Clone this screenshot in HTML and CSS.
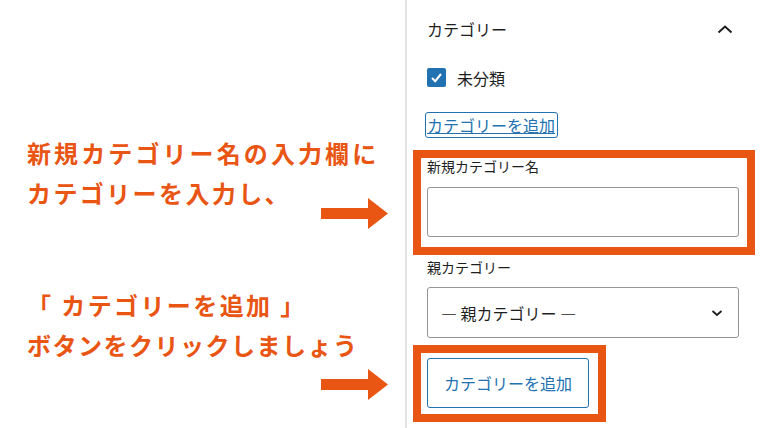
FILE: index.html
```html
<!DOCTYPE html>
<html lang="ja">
<head>
    <meta charset="UTF-8">
    <meta name="viewport" content="width=device-width, initial-scale=1.0">
    <title>カテゴリーを追加</title>
    <link rel="stylesheet" href="styles.css">
</head>
<body>
    <div class="page">
        <!-- 説明 -->
        <div class="notes">
            <p class="note">
                <span class="line line-wide">新規カテゴリー名の入力欄に</span>
                <span class="line">カテゴリーを入力し、</span>
            </p>
            <svg class="arrow arrow-first" width="67" height="31" viewBox="0 0 67 31">
                <rect x="0" y="10" width="49" height="11" fill="#e95513"/>
                <polygon points="47,0 67,15.5 47,31" fill="#e95513"/>
            </svg>
            <p class="note note-second">
                <span class="line">「 カテゴリーを追加 」</span>
                <span class="line line-narrow">ボタンをクリックしましょう</span>
            </p>
            <svg class="arrow arrow-second" width="67" height="31" viewBox="0 0 67 31">
                <rect x="0" y="10" width="49" height="11" fill="#e95513"/>
                <polygon points="47,0 67,15.5 47,31" fill="#e95513"/>
            </svg>
        </div>

        <!-- サイドバー -->
        <div class="sidebar">
            <div class="panel-header">
                <span>カテゴリー</span>
                <svg class="chevron-up" width="16" height="10" viewBox="0 0 16 10">
                    <polyline points="1.5,8.5 8,2.5 14.5,8.5" fill="none" stroke="#1e1e1e" stroke-width="2"/>
                </svg>
            </div>
            <div class="check-row">
                <span class="checkbox">
                    <svg width="19" height="19" viewBox="0 0 19 19">
                        <polyline points="5,10 8.2,13.2 14,6" fill="none" stroke="#fff" stroke-width="2"/>
                    </svg>
                </span>
                <span>未分類</span>
            </div>
            <span class="add-link">カテゴリーを追加</span>
            <div class="highlight highlight-input">
                <div class="field-label">新規カテゴリー名</div>
                <div class="text-input"></div>
            </div>
            <div class="field-label parent-label">親カテゴリー</div>
            <div class="select">
                <span>— 親カテゴリー —</span>
                <svg width="12" height="8" viewBox="0 0 12 8">
                    <polyline points="1.5,2 6,6 10.5,2" fill="none" stroke="#1e1e1e" stroke-width="1.8"/>
                </svg>
            </div>
            <div class="highlight highlight-button">
                <button class="add-button">カテゴリーを追加</button>
            </div>
        </div>
    </div>
</body>
</html>
```

FILE: styles.css
```css
/* Stile generale */
body {
    margin: 0;
    font-family: "Noto Sans CJK JP", "Noto Sans", sans-serif;
    background: #ffffff;
    color: #1e1e1e;
}

.page {
    display: flex;
    width: 760px;
    height: 428px;
    overflow: hidden;
}

/* 説明 */
.notes {
    width: 405px;
    flex-shrink: 0;
    box-sizing: border-box;
    display: flex;
    flex-direction: column;
    padding: 133px 0 0 27px;
}

.note {
    margin: 0;
    font-size: 24px;
    font-weight: bold;
    line-height: 40px;
    color: #e95513;
    letter-spacing: 2.4px;
    white-space: nowrap;
}

.line {
    display: block;
}

.line-wide {
    letter-spacing: 3.1px;
}

.line-narrow {
    letter-spacing: 1.5px;
}

.note-second {
    margin-top: 56px;
}

.arrow {
    display: block;
    align-self: flex-end;
    margin-right: 17px;
}

.arrow-first {
    margin-top: -15px;
}

.arrow-second {
    margin-top: 4px;
}

/* サイドバー */
.sidebar {
    flex: 1;
    display: flex;
    flex-direction: column;
    border-left: 2px solid #e2e2e2;
    padding: 0 21px 0 20px;
}

.panel-header {
    height: 58px;
    display: flex;
    align-items: center;
    justify-content: space-between;
    font-size: 16px;
}

.chevron-up {
    margin-right: 6px;
}

.check-row {
    margin-top: 10px;
    height: 19px;
    display: flex;
    align-items: center;
    gap: 11px;
    font-size: 16px;
}

.checkbox {
    width: 19px;
    height: 19px;
    border-radius: 2px;
    background: #2271b1;
}

.checkbox svg {
    display: block;
}

.add-link {
    align-self: flex-start;
    margin: 25px 0 0 -2px;
    padding: 0 2px 0 1px;
    border: 1.5px solid #2271b1;
    border-radius: 3px;
    font-size: 16px;
    line-height: 24px;
    color: #2271b1;
    text-decoration: underline;
}

.highlight {
    border: 8px solid #e95513;
    margin-left: -14px;
}

.highlight-input {
    margin: 12px -16px 0 -14px;
    padding: 0 8px 10px 6px;
}

.field-label {
    font-size: 14px;
    line-height: 17px;
}

.parent-label {
    margin-top: 4px;
}

.text-input {
    margin-top: 12px;
    height: 50px;
    box-sizing: border-box;
    border: 1px solid #949494;
    border-radius: 3px;
}

.select {
    margin-top: 11px;
    height: 51px;
    box-sizing: border-box;
    border: 1px solid #949494;
    border-radius: 3px;
    display: flex;
    align-items: center;
    justify-content: space-between;
    padding: 0 15px 0 13px;
    font-size: 16px;
}

.highlight-button {
    align-self: flex-start;
    margin-top: 7px;
    padding: 5px 9px 6px 6px;
}

.add-button {
    display: block;
    width: 162px;
    height: 50px;
    padding: 0;
    background: #ffffff;
    border: 1px solid #2271b1;
    border-radius: 3px;
    color: #2271b1;
    font-family: inherit;
    font-size: 16px;
}
```
